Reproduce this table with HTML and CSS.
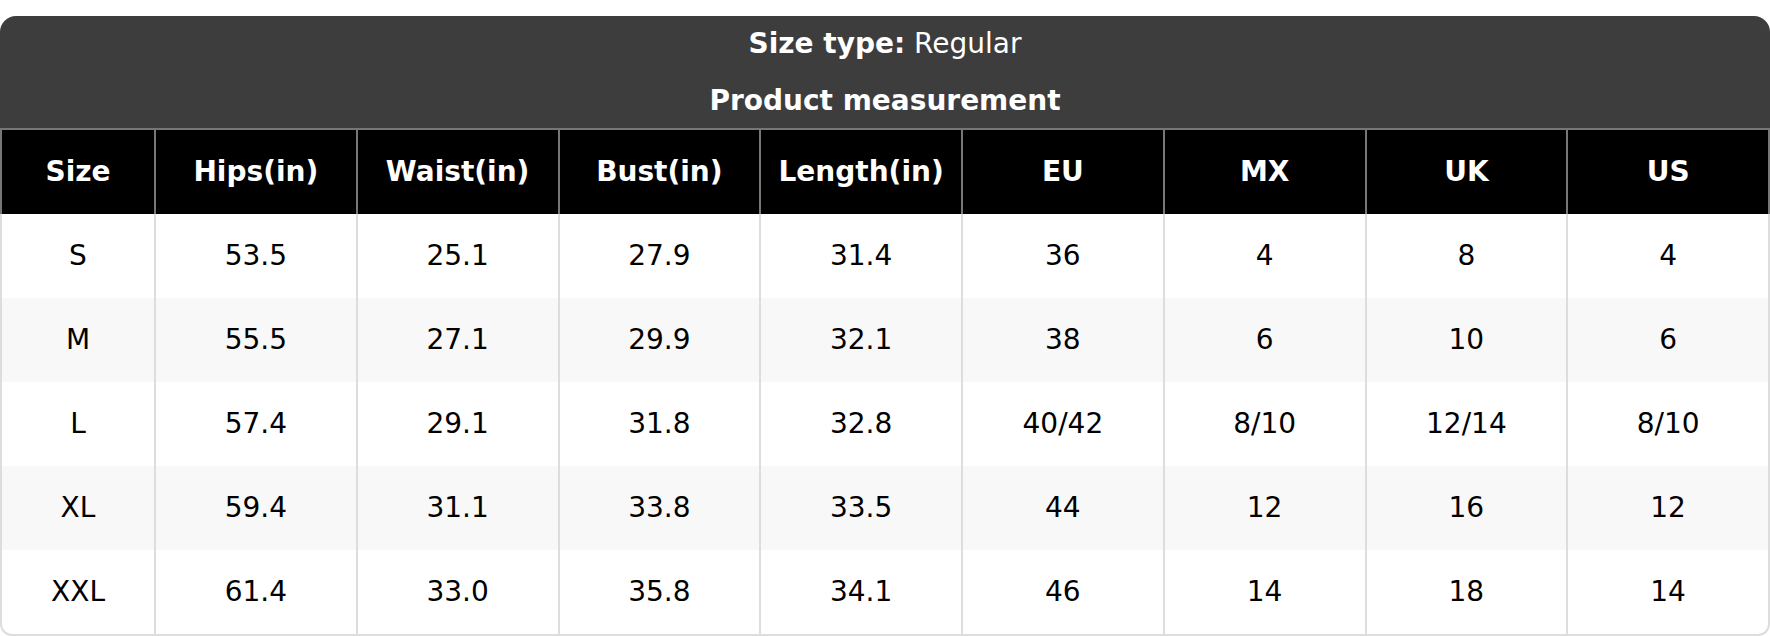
FILE: index.html
```html
<!DOCTYPE html>
<html>
<head>
<meta charset="utf-8">
<link rel="stylesheet" href="styles.css">
</head>
<body>
<div class="chart">
  <div class="title">
    <div class="title-line"><b>Size type:</b> Regular</div>
    <div class="title-line"><b>Product measurement</b></div>
  </div>
  <table class="sizes">
    <colgroup>
      <col class="col-first">
      <col><col><col><col><col><col><col><col>
    </colgroup>
    <thead>
      <tr>
        <th>Size</th><th>Hips(in)</th><th>Waist(in)</th><th>Bust(in)</th><th>Length(in)</th><th>EU</th><th>MX</th><th>UK</th><th>US</th>
      </tr>
    </thead>
    <tbody>
      <tr><td>S</td><td>53.5</td><td>25.1</td><td>27.9</td><td>31.4</td><td>36</td><td>4</td><td>8</td><td>4</td></tr>
      <tr><td>M</td><td>55.5</td><td>27.1</td><td>29.9</td><td>32.1</td><td>38</td><td>6</td><td>10</td><td>6</td></tr>
      <tr><td>L</td><td>57.4</td><td>29.1</td><td>31.8</td><td>32.8</td><td>40/42</td><td>8/10</td><td>12/14</td><td>8/10</td></tr>
      <tr><td>XL</td><td>59.4</td><td>31.1</td><td>33.8</td><td>33.5</td><td>44</td><td>12</td><td>16</td><td>12</td></tr>
      <tr><td>XXL</td><td>61.4</td><td>33.0</td><td>35.8</td><td>34.1</td><td>46</td><td>14</td><td>18</td><td>14</td></tr>
    </tbody>
  </table>
</div>
</body>
</html>
```

FILE: styles.css
```css
html, body {
  margin: 0;
  padding: 0;
  background: #ffffff;
}

body {
  font-family: "DejaVu Sans", Verdana, sans-serif;
  color: #000000;
}

.chart {
  margin-top: 16px;
  width: 1770px;
}

.title {
  background: #3d3d3d;
  color: #ffffff;
  border-radius: 16px 16px 0 0;
  padding: 8px 0 7px;
  display: flex;
  flex-direction: column;
  gap: 17px;
  text-align: center;
  font-size: 28px;
}

.title-line {
  line-height: 40px;
}

.title-line b {
  font-weight: bold;
}

.sizes {
  width: 1770px;
  table-layout: fixed;
  border-collapse: separate;
  border-spacing: 0;
  font-size: 28px;
}

.col-first {
  width: 156px;
}

.sizes th,
.sizes td {
  padding: 0;
  text-align: center;
  vertical-align: middle;
  box-sizing: border-box;
  line-height: 34px;
}

.sizes th {
  background: #000000;
  color: #ffffff;
  font-weight: bold;
  height: 86px;
  border-top: 2px solid #777777;
  border-right: 2px solid #777777;
}

.sizes th:first-child {
  border-left: 2px solid #777777;
}

.sizes td {
  height: 84px;
  border-right: 2px solid #dddddd;
  background: #ffffff;
}

.sizes td:first-child {
  border-left: 2px solid #dddddd;
}

.sizes tbody tr:nth-child(even) td {
  background: #f8f8f8;
}

.sizes tbody tr:last-child td {
  border-bottom: 2px solid #dddddd;
  height: 86px;
}

.sizes tbody tr:last-child td:first-child {
  border-bottom-left-radius: 12px;
}

.sizes tbody tr:last-child td:last-child {
  border-bottom-right-radius: 12px;
}
```
